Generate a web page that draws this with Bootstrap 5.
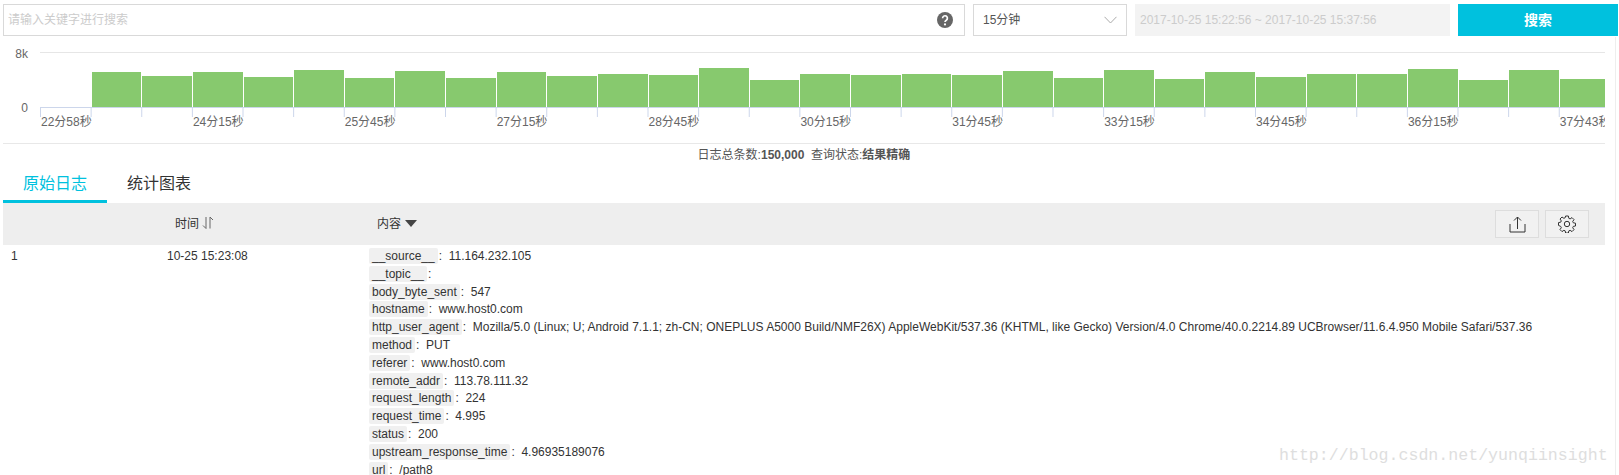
<!DOCTYPE html>
<html lang="zh-CN">
<head>
<meta charset="utf-8">
<title>日志查询</title>
<link href="https://cdn.jsdelivr.net/npm/bootstrap@5.3.0/dist/css/bootstrap.min.css" rel="stylesheet">
<style>
html,body{height:475px;overflow:hidden;background:#fff}
body{font-family:"Liberation Sans","Noto Sans CJK SC",sans-serif;font-size:12px;color:#333;line-height:18px}
.page-wrap{position:relative;height:475px;padding:4px 0 0 3px;overflow:hidden}
.side-rule{position:absolute;left:1615px;top:37px;bottom:0;border-left:1px solid #eee}
.search-bar{width:1616px;height:32px}
.kw-box{width:962px;border:1px solid #d9d9d9;padding:0 11px 0 4px}
.kw-input{border:0;outline:0;flex:1;font-size:12px;padding:0;height:30px}
.kw-input::placeholder{color:#ccc}
.range-box{width:154px;border:1px solid #d9d9d9;padding:0 9px;margin-left:8px;color:#555}
.time-box{width:315px;margin-left:8px;background:#f3f3f3;color:#ccc;padding-left:5px}
.go-btn{width:160px;margin-left:8px;border:0;border-radius:0;background:#00c1de;color:#fff;font-size:14px;font-weight:700;padding:0;flex:none}
.go-btn:hover{background:#00c1de;color:#fff}
.chart-wrap{height:91px;margin-top:16px;width:1602px}
.y-axis{width:37px;height:72px;margin-top:-7px;padding-right:12px;color:#666;text-align:right;font-size:12px;flex:none}
.plot-area{width:1565px;overflow:hidden}
.bars-box{height:54px;border-top:1px solid #e6e6e6;box-sizing:content-box;width:1600px}
.bar-cell{width:50.63px;flex:none}
.bar-fill{background:#87c96e;margin-left:1px}
.tick-row{height:10px;border-top:1px solid #ccd6eb;width:1600px;background-image:linear-gradient(to right,#ccd6eb 1px,transparent 1px);background-size:50.63px 100%}
.label-row{width:1600px;color:#666;margin-top:-4px}
.label-cell{width:151.89px;flex:none;padding-left:1px;white-space:nowrap}
.info-line{width:1602px;border-top:1px solid #e8e8e8;text-align:center;color:#555;padding-top:2px;height:22px}
.tab-row{width:1602px;height:38px}
.tab-item{font-size:16px;height:38px;line-height:38px;width:104px;text-align:center;color:#333;text-decoration:none}
.tab-item.on{color:#00c1de;border-bottom:3px solid #00c1de}
.log-table{width:1602px;table-layout:fixed;margin:0;font-size:12px;color:#333}
.log-table>thead>tr>th{background:#eee;font-weight:400;height:42px;padding:0 16px;vertical-align:middle;border:0;color:#333;box-shadow:none}
.log-table>tbody>tr>td{padding:2px 8px 0;border:0;vertical-align:top;color:#333;box-shadow:none}
.col-a{width:156px}.col-b{width:202px}
.act-btn{width:44px;height:28px;padding:0;border:1px solid #ddd;border-radius:0;background:#f1f1f1;margin-left:6px;line-height:1}
.sort-mark{margin-bottom:3px}
.kv-line{height:17.8px;white-space:nowrap}
.kv-key{display:inline-block;background:#f0f0f0;border-radius:2px;padding:0 3px;height:16px;line-height:16px;margin-right:1px}
.kv-val{margin-left:3.3px}
.water-mark{position:absolute;left:1279px;top:447px;font-family:"Liberation Mono",monospace;font-size:16.6px;color:#dedede;white-space:nowrap}
</style>
</head>
<body>
<div class="page-wrap">
  <div class="side-rule"></div>

  <div class="d-flex search-bar">
    <div class="kw-box d-flex align-items-center">
      <input class="kw-input" type="text" placeholder="请输入关键字进行搜索">
      <svg width="16" height="16" viewBox="0 0 16 16"><circle cx="8" cy="8" r="8" fill="#666"/><path d="M5.6 6.2a2.4 2.4 0 1 1 3.7 2c-.9.6-1.3 1-1.3 1.9" fill="none" stroke="#fff" stroke-width="1.7"/><circle cx="8" cy="12.4" r="1.1" fill="#fff"/></svg>
    </div>
    <div class="range-box d-flex align-items-center justify-content-between">
      <span>15分钟</span>
      <svg width="13" height="8" viewBox="0 0 13 8"><path d="M.5.8l6 6.2 6-6.2" fill="none" stroke="#aaa"/></svg>
    </div>
    <div class="time-box d-flex align-items-center">2017-10-25 15:22:56 ~ 2017-10-25 15:37:56</div>
    <button class="btn go-btn" type="button">搜索</button>
  </div>

  <div class="d-flex chart-wrap">
    <div class="y-axis d-flex flex-column justify-content-between"><span>8k</span><span>0</span></div>
    <div class="plot-area">
      <div class="bars-box d-flex align-items-end">
        <div class="bar-cell"></div>
        <div class="bar-cell"><div class="bar-fill" style="height:35px"></div></div>
        <div class="bar-cell"><div class="bar-fill" style="height:31px"></div></div>
        <div class="bar-cell"><div class="bar-fill" style="height:35px"></div></div>
        <div class="bar-cell"><div class="bar-fill" style="height:30px"></div></div>
        <div class="bar-cell"><div class="bar-fill" style="height:37px"></div></div>
        <div class="bar-cell"><div class="bar-fill" style="height:29px"></div></div>
        <div class="bar-cell"><div class="bar-fill" style="height:36px"></div></div>
        <div class="bar-cell"><div class="bar-fill" style="height:29px"></div></div>
        <div class="bar-cell"><div class="bar-fill" style="height:35px"></div></div>
        <div class="bar-cell"><div class="bar-fill" style="height:31px"></div></div>
        <div class="bar-cell"><div class="bar-fill" style="height:33px"></div></div>
        <div class="bar-cell"><div class="bar-fill" style="height:32px"></div></div>
        <div class="bar-cell"><div class="bar-fill" style="height:39px"></div></div>
        <div class="bar-cell"><div class="bar-fill" style="height:27px"></div></div>
        <div class="bar-cell"><div class="bar-fill" style="height:33px"></div></div>
        <div class="bar-cell"><div class="bar-fill" style="height:32px"></div></div>
        <div class="bar-cell"><div class="bar-fill" style="height:33px"></div></div>
        <div class="bar-cell"><div class="bar-fill" style="height:32px"></div></div>
        <div class="bar-cell"><div class="bar-fill" style="height:36px"></div></div>
        <div class="bar-cell"><div class="bar-fill" style="height:29px"></div></div>
        <div class="bar-cell"><div class="bar-fill" style="height:37px"></div></div>
        <div class="bar-cell"><div class="bar-fill" style="height:28px"></div></div>
        <div class="bar-cell"><div class="bar-fill" style="height:35px"></div></div>
        <div class="bar-cell"><div class="bar-fill" style="height:30px"></div></div>
        <div class="bar-cell"><div class="bar-fill" style="height:33px"></div></div>
        <div class="bar-cell"><div class="bar-fill" style="height:33px"></div></div>
        <div class="bar-cell"><div class="bar-fill" style="height:38px"></div></div>
        <div class="bar-cell"><div class="bar-fill" style="height:27px"></div></div>
        <div class="bar-cell"><div class="bar-fill" style="height:37px"></div></div>
        <div class="bar-cell"><div class="bar-fill" style="height:28px"></div></div>
      </div>
      <div class="tick-row"></div>
      <div class="label-row d-flex">
        <span class="label-cell">22分58秒</span>
        <span class="label-cell">24分15秒</span>
        <span class="label-cell">25分45秒</span>
        <span class="label-cell">27分15秒</span>
        <span class="label-cell">28分45秒</span>
        <span class="label-cell">30分15秒</span>
        <span class="label-cell">31分45秒</span>
        <span class="label-cell">33分15秒</span>
        <span class="label-cell">34分45秒</span>
        <span class="label-cell">36分15秒</span>
        <span class="label-cell">37分43秒</span>
      </div>
    </div>
  </div>

  <div class="info-line">日志总条数:<b>150,000</b>&nbsp; 查询状态:<b>结果精确</b></div>

  <div class="d-flex tab-row">
    <a class="tab-item on" href="#">原始日志</a>
    <a class="tab-item" href="#">统计图表</a>
  </div>

  <table class="table log-table">
    <colgroup><col class="col-a"><col class="col-b"><col></colgroup>
    <thead>
      <tr>
        <th></th>
        <th>时间 <svg class="sort-mark" width="12" height="14" viewBox="0 0 12 14"><path d="M4 1v11.500L1 9.500M8 12.500V1l3 3" fill="none" stroke="#666"/></svg></th>
        <th>
          <div class="d-flex align-items-center justify-content-between">
            <span class="d-flex align-items-center">内容<svg class="ms-1" width="12" height="8" viewBox="0 0 12 8"><path d="M0 0h12L6 7z" fill="#444"/></svg></span>
            <span class="d-flex">
              <button class="btn act-btn" type="button" aria-label="导出"><svg width="17" height="17" viewBox="0 0 17 17"><path d="M1 8v8h15V8M8.500 13V1M5 4.500L8.500 1 12 4.500" fill="none" stroke="#333"/></svg></button>
              <button class="btn act-btn" type="button" aria-label="设置"><svg width="18" height="18" viewBox="0 0 18 18"><path d="M7.600 1h2.800l.4 2.300 1.300.6 1.900-1.300 2 2-1.300 1.900.6 1.300 2.200.4v2.800l-2.200.4-.6 1.300 1.300 1.900-2 2-1.900-1.300-1.300.6-.4 2.100H7.600l-.4-2.100-1.300-.6-1.900 1.300-2-2 1.300-1.900-.6-1.300L.500 10.400V7.600l2.200-.4.6-1.300L2 4l2-2 1.900 1.300 1.300-.6z" fill="none" stroke="#333"/><circle cx="9" cy="9" r="2.700" fill="none" stroke="#333"/></svg></button>
            </span>
          </div>
        </th>
      </tr>
    </thead>
    <tbody>
      <tr>
        <td>1</td>
        <td>10-25 15:23:08</td>
        <td>
          <div class="kv-line"><span class="kv-key">__source__</span>: <span class="kv-val">11.164.232.105</span></div>
          <div class="kv-line"><span class="kv-key">__topic__</span>:</div>
          <div class="kv-line"><span class="kv-key">body_byte_sent</span>: <span class="kv-val">547</span></div>
          <div class="kv-line"><span class="kv-key">hostname</span>: <span class="kv-val">www.host0.com</span></div>
          <div class="kv-line"><span class="kv-key">http_user_agent</span>: <span class="kv-val">Mozilla/5.0 (Linux; U; Android 7.1.1; zh-CN; ONEPLUS A5000 Build/NMF26X) AppleWebKit/537.36 (KHTML, like Gecko) Version/4.0 Chrome/40.0.2214.89 UCBrowser/11.6.4.950 Mobile Safari/537.36</span></div>
          <div class="kv-line"><span class="kv-key">method</span>: <span class="kv-val">PUT</span></div>
          <div class="kv-line"><span class="kv-key">referer</span>: <span class="kv-val">www.host0.com</span></div>
          <div class="kv-line"><span class="kv-key">remote_addr</span>: <span class="kv-val">113.78.111.32</span></div>
          <div class="kv-line"><span class="kv-key">request_length</span>: <span class="kv-val">224</span></div>
          <div class="kv-line"><span class="kv-key">request_time</span>: <span class="kv-val">4.995</span></div>
          <div class="kv-line"><span class="kv-key">status</span>: <span class="kv-val">200</span></div>
          <div class="kv-line"><span class="kv-key">upstream_response_time</span>: <span class="kv-val">4.96935189076</span></div>
          <div class="kv-line"><span class="kv-key">url</span>: <span class="kv-val">/path8</span></div>
        </td>
      </tr>
    </tbody>
  </table>

  <div class="water-mark">http://blog.csdn.net/yunqiinsight</div>
</div>
</body>
</html>
